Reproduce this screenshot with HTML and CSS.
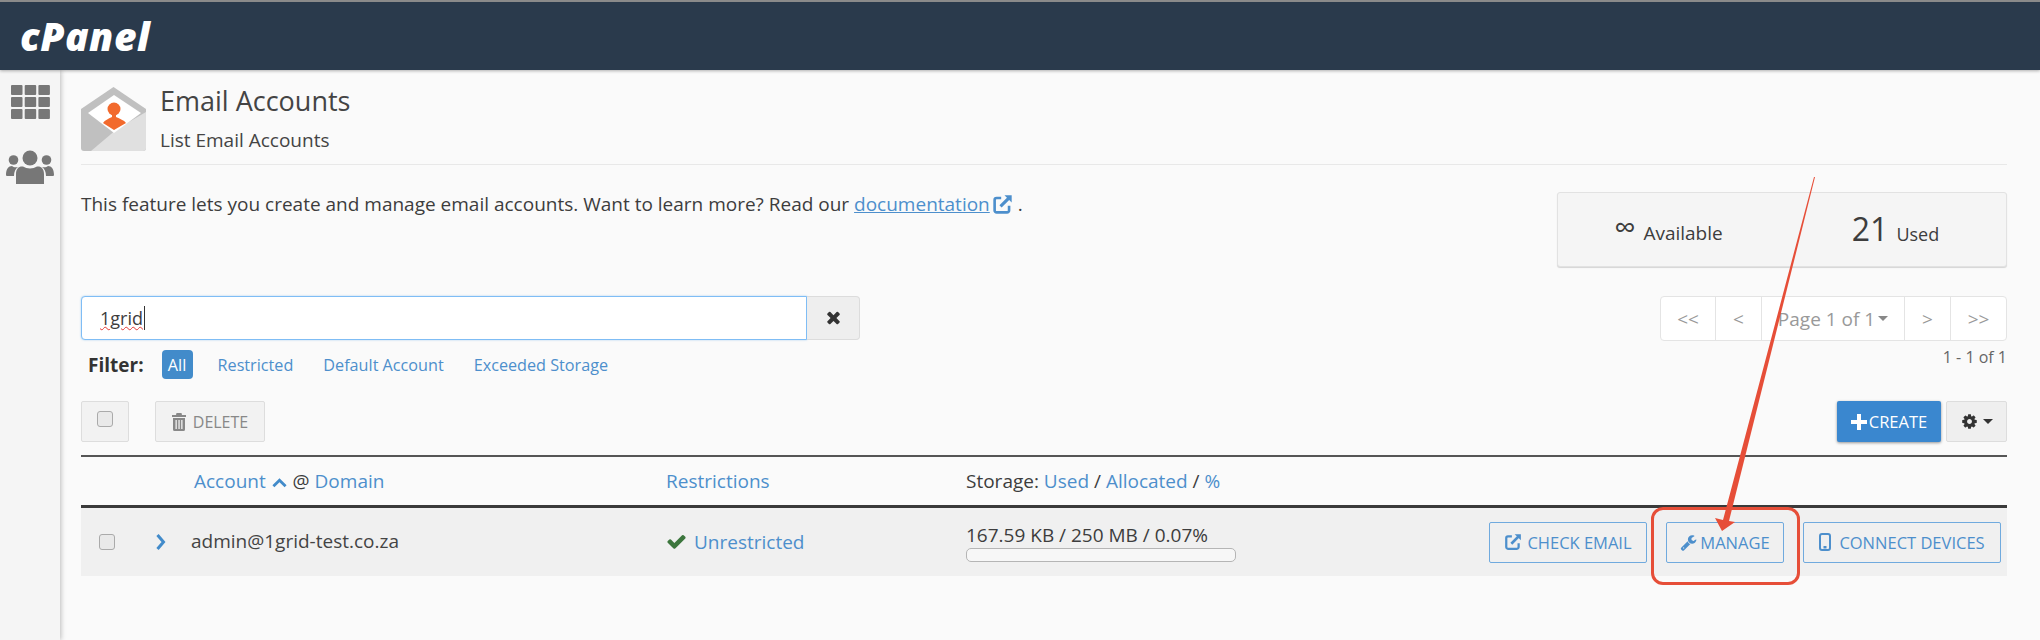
FILE: index.html
```html
<!DOCTYPE html>
<html lang="en">

<head>
    <meta charset="UTF-8">
    <title>Email Accounts</title>
    <link rel="stylesheet" href="styles.css">
</head>

<body>
    <svg class="icon-defs" width="0" height="0">
        <symbol id="i-external" viewBox="0 0 16 16">
            <path d="M7 3H3.500A1.500 1.500 0 0 0 2 4.500V12.500A1.500 1.500 0 0 0 3.500 14H11.500A1.500 1.500 0 0 0 13 12.500V9" fill="none" stroke="currentColor" stroke-width="2"/>
            <path d="M6.500 9.500L13 3" fill="none" stroke="currentColor" stroke-width="2.400"/>
            <path d="M9.500 1H15V6.500Z" fill="currentColor"/>
        </symbol>
    </svg>

    <header class="topbar">
        <span class="logo">cPanel</span>
    </header>

    <div class="layout">
        <nav class="sidebar">
            <svg class="side-grid" viewBox="0 0 39 34" fill="#777">
                <rect x="0" y="0" width="11.500" height="10" rx="1"/><rect x="13.700" y="0" width="11.500" height="10" rx="1"/><rect x="27.400" y="0" width="11.500" height="10" rx="1"/>
                <rect x="0" y="12" width="11.500" height="10" rx="1"/><rect x="13.700" y="12" width="11.500" height="10" rx="1"/><rect x="27.400" y="12" width="11.500" height="10" rx="1"/>
                <rect x="0" y="24" width="11.500" height="10" rx="1"/><rect x="13.700" y="24" width="11.500" height="10" rx="1"/><rect x="27.400" y="24" width="11.500" height="10" rx="1"/>
            </svg>
            <svg class="side-users" viewBox="0 0 48 34" fill="#777">
                <circle cx="24" cy="8" r="7.500"/>
                <circle cx="7.500" cy="10" r="4.800"/>
                <circle cx="40.500" cy="10" r="4.800"/>
                <path d="M10 34V24C10 18.500 13 16 17 16.500C21 19 27 19 31 16.500C35 16 38 18.500 38 24V34Z"/>
                <path d="M0 25C0 19 2.500 16 6 16C7.500 17.500 10 17.500 12 17C9.500 19 8 21.500 8 26H2.500C1 26 0 26 0 25Z"/>
                <path d="M48 25C48 19 45.500 16 42 16C40.500 17.500 38 17.500 36 17C38.500 19 40 21.500 40 26H45.500C47 26 48 26 48 25Z"/>
            </svg>
        </nav>

        <main class="main">
            <div class="page-head">
                <svg class="head-icon" viewBox="0 0 65 64">
                    <path d="M0 22L32.500 0L65 22V61A3 3 0 0 1 62 64H3A3 3 0 0 1 0 61Z" fill="#c0c0c0"/>
                    <path d="M65 25V61A3 3 0 0 1 62 64H10L36 42Z" fill="#e0e0e0"/>
                    <path d="M7 26L33 8L60 26L33 46Z" fill="#fff"/>
                    <circle cx="33" cy="22" r="6.500" fill="#f26a2d"/>
                    <path d="M31 27H35V30C39 32 43 33 45 36L33 43L22 36C24 33 27 32 31 30Z" fill="#f26a2d"/>
                </svg>
                <div>
                    <h1 class="page-title">Email Accounts</h1>
                    <div class="page-sub">List Email Accounts</div>
                </div>
            </div>

            <div class="intro">
                <p class="intro-text">This feature lets you create and manage email accounts. Want to learn more? Read our <a href="#" class="doc-link">documentation</a> <svg class="ico ico-doc"><use href="#i-external"/></svg> .</p>
                <div class="stats">
                    <div class="stat"><span class="stat-inf">∞</span> Available</div>
                    <div class="stat"><span class="stat-num">21</span> Used</div>
                </div>
            </div>

            <div class="toolbar">
                <div class="search-col">
                    <div class="search">
                        <div class="search-input"><span class="search-value">1grid</span></div>
                        <button class="search-clear">
                            <svg viewBox="0 0 1408 1792" width="15" height="19" fill="#333"><path d="M1298 1214q0 40-28 68l-136 136q-28 28-68 28t-68-28l-294-294-294 294q-28 28-68 28t-68-28l-136-136q-28-28-28-68t28-68l294-294-294-294q-28-28-28-68t28-68l136-136q28-28 68-28t68 28l294 294 294-294q28-28 68-28t68 28l136 136q28 28 28 68t-28 68l-294 294 294 294q28 28 28 68z"/></svg>
                        </button>
                    </div>
                    <div class="filters">
                        <strong class="filter-label">Filter:</strong>
                        <span class="pill">All</span>
                        <a href="#" class="filter-link">Restricted</a>
                        <a href="#" class="filter-link">Default Account</a>
                        <a href="#" class="filter-link">Exceeded Storage</a>
                    </div>
                </div>
                <div class="paging-col">
                    <div class="pager">
                        <span class="pg pg-first">&lt;&lt;</span>
                        <span class="pg pg-prev">&lt;</span>
                        <span class="pg pg-page">Page 1 of 1<i class="caret"></i></span>
                        <span class="pg pg-prev">&gt;</span>
                        <span class="pg pg-first">&gt;&gt;</span>
                    </div>
                    <div class="page-count">1 - 1 of 1</div>
                </div>
            </div>

            <div class="actions">
                <div class="actions-left">
                    <span class="btn-check"><span class="box"></span></span>
                    <span class="btn-delete">
                        <svg viewBox="0 0 14 18" width="14" height="18" fill="#888"><path d="M4.500 0H9.500L10 2H14V4H0V2H4ZM1 5H13V16.500A1.500 1.500 0 0 1 11.500 18H2.500A1.500 1.500 0 0 1 1 16.500ZM3.500 7V16H4.800V7ZM6.400 7V16H7.700V7ZM9.200 7V16H10.500V7Z" fill-rule="evenodd"/></svg>
                        DELETE
                    </span>
                </div>
                <div class="actions-right">
                    <span class="btn-create">
                        <svg viewBox="0 0 16 16" width="16" height="16" fill="#fff"><path d="M6 0H10V6H16V10H10V16H6V10H0V6H6Z"/></svg>
                        CREATE
                    </span>
                    <span class="btn-gear">
                        <svg viewBox="0 0 1792 1792" width="17" height="17" fill="#333"><path d="M1152 896q0-106-75-181t-181-75-181 75-75 181 75 181 181 75 181-75 75-181zm512-109v222q0 12-8 23t-20 13l-185 28q-19 54-39 91 35 50 107 138 10 12 10 25t-9 23q-27 37-99 108t-94 71q-12 0-26-9l-138-108q-44 23-91 38-16 136-29 186-7 28-36 28h-222q-14 0-24.500-8.500t-11.500-21.500l-28-184q-49-16-90-37l-141 107q-10 9-25 9-14 0-25-11-126-114-165-168-7-10-7-23 0-12 8-23 15-21 51-66.500t54-70.500q-27-50-41-99l-183-27q-13-2-21-12.500t-8-23.500v-222q0-12 8-23t19-13l186-28q14-46 39-92-40-57-107-138-10-12-10-24 0-10 9-23 26-36 98.500-107.500t94.500-71.500q13 0 26 10l138 107q44-23 91-38 16-136 29-186 7-28 36-28h222q14 0 24.500 8.500t11.500 21.500l28 184q49 16 90 37l142-107q9-9 24-9 13 0 25 10 129 119 165 170 7 8 7 22 0 12-8 23-15 21-51 66.500t-54 70.500q26 50 41 98l183 28q13 2 21 12.500t8 23.500z"/></svg>
                        <i class="caret caret-dark"></i>
                    </span>
                </div>
            </div>

            <div class="table-head">
                <div></div>
                <div><a href="#">Account</a> <svg class="sort-up" viewBox="0 0 16 10" width="15" height="10"><path d="M1.500 8.500L8 2L14.500 8.500" fill="none" stroke="#428bca" stroke-width="3"/></svg> @ <a href="#">Domain</a></div>
                <div><a href="#">Restrictions</a></div>
                <div>Storage: <a href="#">Used</a> / <a href="#">Allocated</a> / <a href="#">%</a></div>
            </div>

            <div class="table-row">
                <div class="cell-check">
                    <span class="box"></span>
                    <svg class="chevron" viewBox="0 0 10 18" width="11" height="18"><path d="M2 2L8 9L2 16" fill="none" stroke="#428bca" stroke-width="3"/></svg>
                </div>
                <div class="cell-email">admin@1grid-test.co.za</div>
                <div class="cell-restrict">
                    <svg viewBox="0 0 1792 1792" width="21" height="21" fill="#3c763d"><path d="M1671 566q0 40-28 68l-724 724-136 136q-28 28-68 28t-68-28l-136-136-362-362q-28-28-28-68t28-68l136-136q28-28 68-28t68 28l294 295 656-657q28-28 68-28t68 28l136 136q28 28 28 68z"/></svg>
                    <a href="#">Unrestricted</a>
                </div>
                <div class="cell-storage">
                    <div>167.59 KB / 250 MB / 0.07%</div>
                    <div class="usage-bar"></div>
                </div>
                <div class="cell-buttons">
                    <span class="btn-line btn-check-email"><svg class="ico"><use href="#i-external"/></svg> CHECK EMAIL</span>
                    <span class="btn-line btn-manage">
                        <svg viewBox="0 0 1792 1792" width="17" height="17" fill="currentColor"><path d="M448 1472q0-26-19-45t-45-19-45 19-19 45 19 45 45 19 45-19 19-45zm644-420l-682 682q-37 37-90 37-52 0-91-37l-106-108q-38-36-38-90 0-53 38-91l681-681q39 98 114.500 173.500t173.500 114.500zm634-435q0 39-23 106-47 134-164.500 217.500t-258.500 83.500q-185 0-316.500-131.500t-131.500-316.500 131.500-316.500 316.500-131.500q58 0 121.500 16.500t107.500 46.500q16 11 16 28t-16 28l-293 169v224l193 107q5-3 79-48.500t135.500-81 70.500-35.500q15 0 23.500 10t8.500 25z"/></svg>
                        MANAGE
                    </span>
                    <span class="btn-line btn-connect">
                        <svg viewBox="0 0 12 18" width="12" height="18"><rect x="1" y="1" width="10" height="16" rx="2" fill="none" stroke="currentColor" stroke-width="2"/><rect x="4.500" y="13" width="3" height="2.500" fill="currentColor"/></svg>
                        CONNECT DEVICES
                    </span>
                </div>
            </div>
        </main>
    </div>

    <!-- annotation drawn over the screenshot -->
    <div class="mark-box"></div>
    <svg class="mark-arrow" viewBox="0 0 2040 640" width="2040" height="640">
        <path d="M1814 177L1815 177L1729 521L1735 522L1722 531L1715 518L1723 520Z" fill="#e64e38"/>
    </svg>
</body>

</html>
```

FILE: styles.css
```css
* {
    box-sizing: border-box;
}

html,
body {
    height: 100%;
}

body {
    margin: 0;
    background: #fafafa;
    color: #3d3d3d;
    font-family: "Open Sans", sans-serif;
    font-size: 19px;
    overflow: hidden;
}

a {
    color: #4d8fcc;
    text-decoration: none;
}

.icon-defs {
    position: absolute;
}

.ico {
    width: 18px;
    height: 18px;
}

/* top bar */
.topbar {
    height: 70px;
    padding-left: 20px;
    border-top: 2px solid #8a8a8a;
    background: #2a3a4c;
    box-shadow: 0 1px 3px rgba(0, 0, 0, 0.3);
    display: flex;
    align-items: center;
    position: relative;
}

.logo {
    margin-top: -2px;
    color: #fff;
    font-family: "Open Sans", sans-serif;
    font-size: 39px;
    font-style: italic;
    font-weight: 800;
    letter-spacing: 0.5px;
    line-height: 1;
}

.layout {
    display: flex;
    height: 570px;
}

.sidebar {
    width: 60px;
    padding-top: 15px;
    background: #f5f5f5;
    box-shadow: 1px 0 5px rgba(0, 0, 0, 0.25);
    display: flex;
    flex-direction: column;
    align-items: center;
    flex-shrink: 0;
}

.side-grid {
    width: 39px;
    height: 34px;
}

.side-users {
    width: 48px;
    height: 34px;
    margin-top: 31px;
}

.main {
    flex: 1;
    padding: 17px 33px 0 21px;
    min-width: 0;
}

/* page heading */
.page-head {
    height: 78px;
    display: flex;
    gap: 14px;
    border-bottom: 1px solid #e8e8e8;
}

.head-icon {
    width: 65px;
    height: 64px;
}

.page-title {
    margin: -1px 0 0;
    font-size: 27px;
    font-weight: 400;
    line-height: 30px;
    color: #444;
}

.page-sub {
    margin-top: 12px;
    font-size: 19px;
    line-height: 24px;
    color: #444;
}

.intro {
    display: flex;
    justify-content: space-between;
    align-items: flex-start;
}

.intro-text {
    margin: 27px 0 0;
    line-height: 24px;
}

.doc-link {
    text-decoration: underline;
}

.ico-doc {
    width: 21px;
    height: 21px;
    margin-left: -3px;
    color: #4d8fcc;
    vertical-align: -4px;
}

.stats {
    width: 450px;
    height: 75px;
    margin-top: 27px;
    display: flex;
    border: 1px solid #e2e2e2;
    border-radius: 3px;
    background: #f5f5f5;
    box-shadow: 0 1px 1px rgba(0, 0, 0, 0.15);
}

.stat {
    flex: 1;
    display: flex;
    align-items: baseline;
    justify-content: center;
    gap: 8px;
    padding-top: 16px;
    font-size: 18px;
}

.stat:first-child {
    padding-right: 6px;
    font-size: 19px;
}

.stat-inf {
    font-size: 30px;
    line-height: 40px;
    position: relative;
    top: -2px;
}

.stat-num {
    font-size: 32px;
    line-height: 40px;
}

/* search and pager */
.toolbar {
    margin-top: 29px;
    display: flex;
    justify-content: space-between;
}

.search {
    display: flex;
    height: 44px;
}

.search-input {
    width: 726px;
    padding-left: 18px;
    border: 1px solid #7fbdf5;
    border-radius: 4px 0 0 4px;
    background: #fff;
    display: flex;
    align-items: center;
    box-shadow: 0 0 2px rgba(102, 175, 233, 0.6);
}

.search-value {
    padding-right: 1px;
    border-right: 1px solid #333;
    font-size: 18px;
    line-height: 24px;
    text-decoration: underline wavy #e53935 1px;
}

.search-clear {
    width: 53px;
    padding: 0;
    border: 1px solid #dcdcdc;
    border-left: 0;
    border-radius: 0 4px 4px 0;
    background: #eee;
    display: flex;
    align-items: center;
    justify-content: center;
}

.filters {
    margin-top: 10px;
    padding-left: 7px;
    display: flex;
    align-items: center;
    font-size: 16.200px;
}

.filter-label {
    margin-right: 18px;
    color: #333;
    font-size: 19px;
}

.pill {
    width: 31px;
    height: 29px;
    margin-right: 25px;
    border-radius: 4px;
    background: #428bca;
    color: #fff;
    display: flex;
    align-items: center;
    justify-content: center;
}

.filter-link {
    margin-right: 30px;
}

.paging-col {
    text-align: right;
}

.pager {
    display: flex;
    height: 45px;
    border: 1px solid #e4e4e4;
    border-radius: 4px;
    background: #fff;
    color: #999;
    font-size: 19px;
}

.pg {
    display: flex;
    align-items: center;
    justify-content: center;
    border-right: 1px solid #e4e4e4;
}

.pg:last-child {
    border-right: 0;
}

.pg-first {
    width: 55px;
}

.pg-prev {
    width: 46px;
}

.pg-page {
    width: 143px;
    gap: 3px;
}

.caret {
    display: inline-block;
    width: 0;
    height: 0;
    border-top: 5px solid #888;
    border-left: 5px solid transparent;
    border-right: 5px solid transparent;
}

.caret-dark {
    border-top-color: #333;
}

.page-count {
    margin-top: 5px;
    font-size: 16px;
    color: #666;
}

/* action row */
.actions {
    height: 41px;
    margin-top: 22px;
    display: flex;
    justify-content: space-between;
}

.actions-left,
.actions-right {
    display: flex;
}

.actions-left {
    gap: 26px;
}

.actions-right {
    gap: 5px;
}

.box {
    display: block;
    width: 16px;
    height: 16px;
    border: 1px solid #aaa;
    border-radius: 3px;
    background: #e9e9e9;
}

.btn-check {
    width: 48px;
    padding: 9px 0 0 15px;
    border: 1px solid #ddd;
    border-radius: 2px;
    background: #f2f2f2;
}

.btn-delete {
    width: 110px;
    border: 1px solid #ddd;
    border-radius: 2px;
    background: #f2f2f2;
    color: #888;
    font-size: 16px;
    display: flex;
    align-items: center;
    justify-content: center;
    gap: 7px;
}

.btn-create {
    width: 104px;
    border-radius: 2px;
    background: #3a87cf;
    color: #fff;
    font-size: 16.500px;
    display: flex;
    align-items: center;
    justify-content: center;
    gap: 2px;
    box-shadow: 0 1px 3px rgba(0, 0, 0, 0.4);
}

.btn-gear {
    width: 61px;
    border: 1px solid #ddd;
    border-radius: 2px;
    background: #efefef;
    display: flex;
    align-items: center;
    justify-content: center;
    gap: 5px;
}

/* accounts table */
.table-head {
    height: 53px;
    margin-top: 13px;
    padding-bottom: 1px;
    border-top: 2px solid #555;
    border-bottom: 3px solid #3a3a3a;
    display: grid;
    grid-template-columns: 113px 472px 300px 1fr;
    align-items: center;
    font-size: 19px;
}

.sort-up {
    margin: 0 1px;
}

.table-row {
    height: 68px;
    background: #f0f0f0;
    display: flex;
    align-items: center;
}

.cell-check {
    width: 110px;
    padding-left: 18px;
    display: flex;
    align-items: center;
    gap: 40px;
    flex-shrink: 0;
}

.cell-email {
    width: 475px;
    margin-top: -3px;
    color: #444;
}

.cell-restrict {
    width: 300px;
    margin-top: -1px;
    display: flex;
    align-items: center;
    gap: 7px;
}

.cell-storage {
    width: 270px;
    margin-top: 1px;
    line-height: 22px;
}

.usage-bar {
    height: 14px;
    margin-top: 2px;
    border: 1px solid #b5b5b5;
    border-radius: 5px;
    background: #f7f7f7;
}

.cell-buttons {
    flex: 1;
    padding-right: 6px;
    display: flex;
    justify-content: flex-end;
    gap: 19px;
}

.btn-line {
    height: 41px;
    border: 1.500px solid #70aade;
    border-radius: 2px;
    color: #4d8fcc;
    font-size: 16.500px;
    display: flex;
    align-items: center;
    justify-content: center;
    gap: 5px;
    white-space: nowrap;
}

.btn-check-email {
    width: 158px;
}

.btn-manage {
    width: 118px;
    gap: 3px;
}

.btn-connect {
    width: 198px;
    gap: 8px;
}

/* red annotation */
.mark-box {
    position: absolute;
    left: 1651px;
    top: 507px;
    width: 149px;
    height: 78px;
    border: 3px solid #e64e38;
    border-radius: 12px;
}

.mark-arrow {
    position: absolute;
    left: 0;
    top: 0;
    pointer-events: none;
}
```
